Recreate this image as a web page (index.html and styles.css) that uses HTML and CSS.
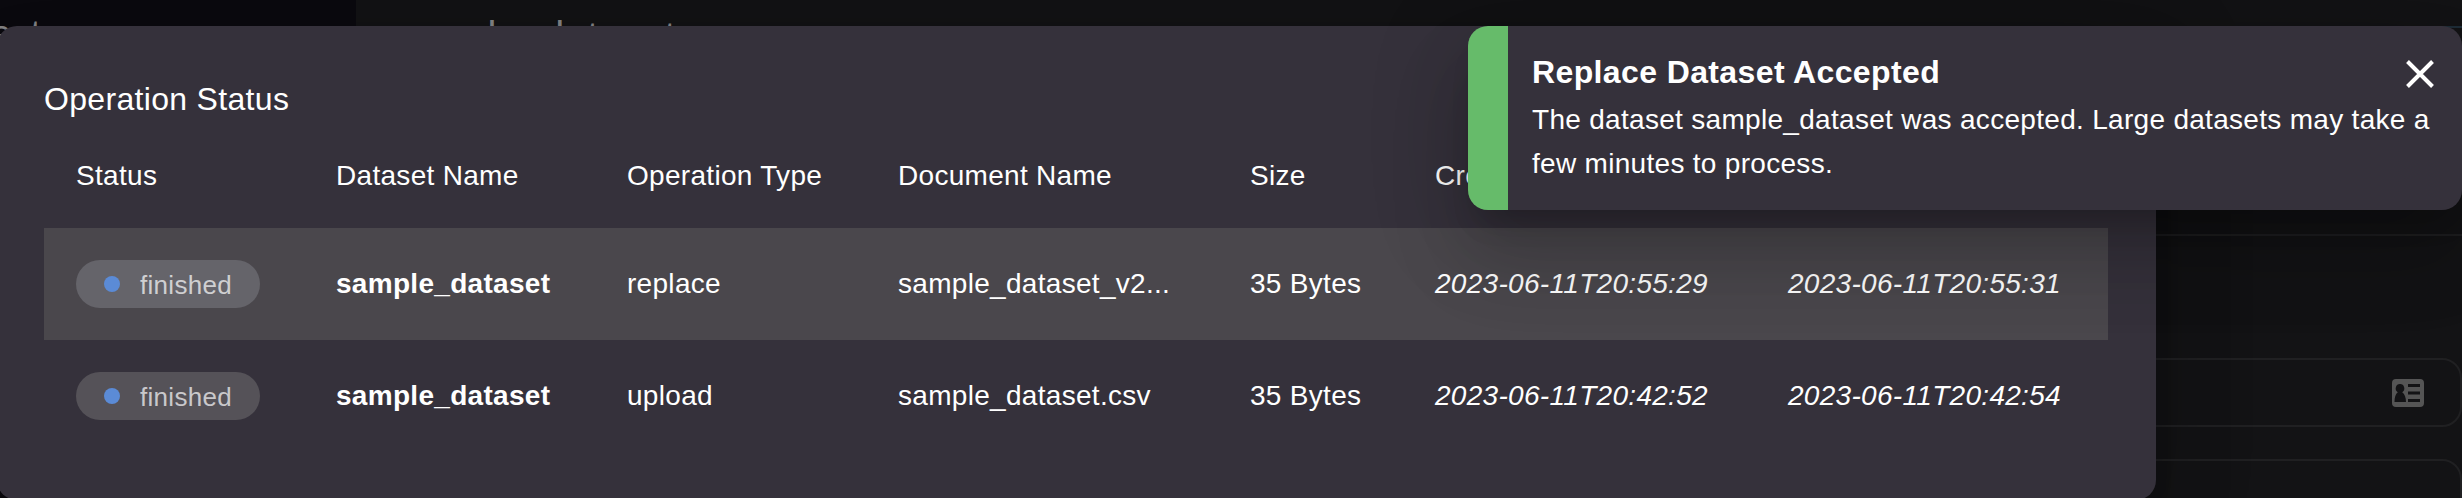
FILE: index.html
```html
<!DOCTYPE html>
<html lang="en">
<head>
<meta charset="utf-8">
<title>Operation Status</title>
<link rel="stylesheet" href="styles.css">
</head>
<body>
<div class="page">
  <aside class="sidebar"><div class="sidebar-title">Datasets</div></aside>
  <main class="content">
    <h1 class="content-title">sample_dataset</h1>
    <div class="divider"></div>
    <div class="field">
      <svg class="card-icon" viewBox="0 0 32 28">
        <path fill="#555" fill-rule="evenodd" d="M4 0H28Q32 0 32 4V24Q32 28 28 28H4Q0 28 0 24V4Q0 0 4 0ZM8 5a4.2 4.4 0 0 0-2.2 8.2C3.600 15 2.500 18 2.500 23H14C14 18 12.500 15 10.200 13.200A4.200 4.400 0 0 0 8 5ZM16 5V8H28V5ZM16 12.500V15.500H28V12.500ZM16 20V23H28V20Z"/>
      </svg>
    </div>
    <div class="field"></div>
  </main>
</div>

<section class="modal">
  <h2 class="modal-title">Operation Status</h2>
  <div class="table">
    <div class="row head">
      <span>Status</span><span>Dataset Name</span><span>Operation Type</span><span>Document Name</span><span>Size</span><span>Created</span><span>Updated</span>
    </div>
    <div class="row shaded">
      <span><span class="pill"><i class="dot"></i>finished</span></span>
      <b>sample_dataset</b><span>replace</span><span>sample_dataset_v2...</span><span>35 Bytes</span><em>2023-06-11T20:55:29</em><em>2023-06-11T20:55:31</em>
    </div>
    <div class="row">
      <span><span class="pill"><i class="dot"></i>finished</span></span>
      <b>sample_dataset</b><span>upload</span><span>sample_dataset.csv</span><span>35 Bytes</span><em>2023-06-11T20:42:52</em><em>2023-06-11T20:42:54</em>
    </div>
  </div>
</section>

<div class="accent"></div>
<div class="toast">
  <div class="toast-bar"></div>
  <div class="toast-body">
    <div class="toast-head">
      <strong class="toast-title">Replace Dataset Accepted</strong>
      <svg class="close" viewBox="0 0 28 28"><path d="M1.500 1.500L26.500 26.500M26.500 1.500L1.500 26.500" stroke="#fff" stroke-width="4"/></svg>
    </div>
    <p class="toast-text">The dataset sample_dataset was accepted. Large datasets may take a<br>few minutes to process.</p>
  </div>
</div>
</body>
</html>
```
FILE: styles.css
```css
* { box-sizing: border-box; }
html { height: 498px; overflow: hidden; }
body {
  margin: 0;
  width: 2462px;
  height: 498px;
  overflow: hidden;
  position: relative;
  background: #131315;
  color: #fff;
  font-family: "Liberation Sans", Arial, sans-serif;
  font-size: 28px;
  letter-spacing: 0.3px;
}
.page { display: flex; height: 498px; overflow: hidden; }
.sidebar { width: 356px; flex: none; background: #0b0a0f; overflow: hidden; }
.sidebar-title {
  margin-left: -85px;
  padding-top: 13px;
  font-size: 36px;
  line-height: 41px;
  color: #858587;
}
.content { flex: 1; display: flex; flex-direction: column; }
.content-title {
  flex: none;
  margin: 0;
  padding: 13px 0 0 32px;
  height: 234px;
  font-size: 40px;
  line-height: 46px;
  font-weight: 400;
  letter-spacing: 0.4px;
  color: #858587;
}
.divider { flex: none; height: 2px; background: #1f1f21; margin-bottom: 122px; }
.field {
  flex: none;
  height: 69px;
  margin-bottom: 32px;
  border: 2px solid #202022;
  border-radius: 20px;
  display: flex;
  align-items: center;
  justify-content: flex-end;
  padding-right: 36px;
}
.card-icon { width: 32px; height: 28px; }

.modal {
  position: absolute;
  left: -3px;
  top: 26px;
  width: 2159px;
  height: 474px;
  padding: 52px 48px 0 47px;
  border-radius: 20px;
  background: #35313b;
  box-shadow: 0 22px 30px -14px rgba(0,0,0,.2), 0 48px 76px 6px rgba(0,0,0,.14), 0 18px 92px 16px rgba(0,0,0,.12);
}
.modal-title {
  margin: 0;
  height: 66px;
  font-size: 32px;
  line-height: 42px;
  font-weight: 400;
  letter-spacing: 0.32px;
}
.row {
  display: grid;
  grid-template-columns: 260px 291px 271px 352px 185px 353px 288px;
  align-items: center;
  height: 112px;
  padding-left: 32px;
  white-space: nowrap;
}
.head { height: 84px; padding-bottom: 20px; }
.shaded { background: #4a474c; }
.pill {
  display: flex;
  align-items: center;
  width: 184px;
  height: 48px;
  padding: 2px 0 0 28px;
  border-radius: 24px;
  background: #555258;
  color: #c9c8cb;
  font-size: 26px;
}
.shaded .pill { background: #65646a; color: #cfcfd1; }
.dot {
  width: 16px;
  height: 16px;
  margin: -2px 20px 0 0;
  border-radius: 50%;
  background: #5b8bd6;
}

.accent {
  position: absolute;
  left: 2436px;
  top: 26px;
  width: 26px;
  height: 2px;
  background: #1f2d38;
}
.toast {
  position: absolute;
  left: 1468px;
  top: 26px;
  width: 994px;
  height: 184px;
  display: flex;
  overflow: hidden;
  border-radius: 20px;
  background: #35313b;
  box-shadow: 0 22px 30px -14px rgba(0,0,0,.2), 0 48px 76px 6px rgba(0,0,0,.14), 0 18px 92px 16px rgba(0,0,0,.12);
}
.toast-bar { width: 40px; flex: none; background: #66bb6a; }
.toast-body { flex: 1; padding: 24px 28px 0 24px; }
.toast-head { display: flex; justify-content: space-between; align-items: center; height: 48px; }
.toast-title { font-size: 32px; letter-spacing: 0.38px; line-height: 44px; margin-top: -4px; }
.close { width: 28px; height: 28px; }
.toast-text { margin: 0; line-height: 44px; white-space: nowrap; }
```
